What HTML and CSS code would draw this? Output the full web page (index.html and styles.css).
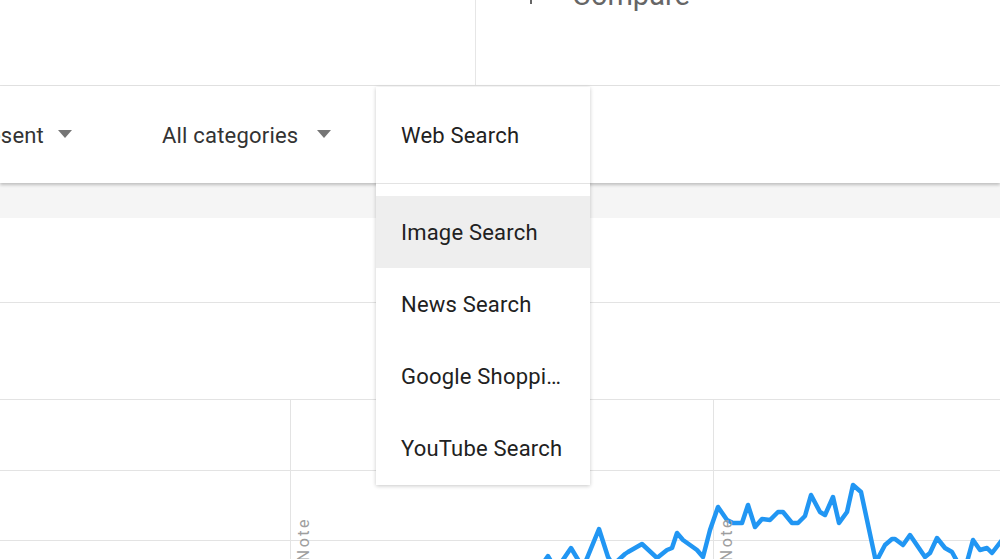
FILE: index.html
```html
<html>
<head>
    <title>Explore - Trends</title>
    <link rel="stylesheet" href="styles.css">
</head>
<body>
<div class="page">
    <header class="top">
        <div class="term"></div>
        <div class="compare">
            <svg class="plus" width="18" height="18" viewBox="0 0 18 18"><path d="M9 0v18M0 9h18"/></svg>
            <span>Compare</span>
        </div>
    </header>

    <div class="filters">
        <div class="filter clip"><span>2004 - present</span><i class="caret"></i></div>
        <div class="filter wide"><span>All categories</span><i class="caret"></i></div>
    </div>

    <div class="band"></div>
    <div class="row first"></div>
    <div class="row second"></div>

    <div class="chart">
        <svg width="1000" height="159" viewBox="0 400 1000 159">
            <g class="grid">
                <line x1="0" y1="470.5" x2="1000" y2="470.5" />
                <line x1="0" y1="540.5" x2="1000" y2="540.5" />
                <line x1="290.5" y1="400" x2="290.5" y2="560" />
                <line x1="713.5" y1="400" x2="713.5" y2="560" />
            </g>
            <path class="trend" d="M535 575 L548 556 L556 570 L571 548 L583 568 L599 529 L608 557 L613 565 L625 554 L628 552 L642 544 L657 558 L667 550 L672 548 L677 533 L683 540 L697 550 L703 557 L710 530 L718 507 L727 520 L733 523 L742 523 L748 505 L755 527 L762 519 L770 520 L778 512 L783 512 L792 523 L798 523 L805 516 L811 495 L820 512 L825 515 L833 497 L839 523 L847 512 L853 485 L861 492 L876 562 L885 545 L892 539 L895 539 L903 545 L910 535 L925 557 L930 553 L937 538 L945 548 L952 552 L958 563 L967 562 L973 540 L980 550 L987 548 L992 553 L1002 540" />
            <text class="note" transform="translate(309 517) rotate(-90)" text-anchor="end">Note</text>
            <text class="note" transform="translate(732 517) rotate(-90)" text-anchor="end">Note</text>
        </svg>
    </div>

    <ul class="menu">
        <li class="current">Web Search</li>
        <li class="hover">Image Search</li>
        <li>News Search</li>
        <li>Google Shopping</li>
        <li>YouTube Search</li>
    </ul>
</div>
</body>
</html>
```

FILE: styles.css
```css
body {
    margin: 0;
    background-color: #fff;
    font-family: Roboto, 'Noto Sans', sans-serif;
    color: #212121;
    overflow: hidden;
}
.page {
    position: relative;
    width: 1000px;
    height: 560px;
    overflow: hidden;
}
.top {
    display: flex;
    height: 85px;
    border-bottom: 1px solid #e3e3e3;
}
.term {
    width: 475px;
    border-right: 1px solid #e6e6e6;
}
.compare {
    display: flex;
    align-items: center;
    height: 28px;
    margin-top: -19px;
    padding-left: 46px;
    color: #666;
    font-size: 29px;
    line-height: 28px;
}
.plus {
    stroke: #666;
    stroke-width: 2;
    margin-right: 32px;
}
.filters {
    position: relative;
    z-index: 1;
    display: flex;
    align-items: center;
    height: 97px;
    padding-top: 2px;
    box-sizing: border-box;
    background-color: #fff;
    box-shadow: 0 2px 3px rgba(0, 0, 0, 0.22);
    font-size: 22px;
    letter-spacing: 0.2px;
    color: #333;
}
.filter {
    display: flex;
    align-items: center;
    gap: 14px;
    white-space: nowrap;
}
.filter.wide {
    gap: 19px;
}
.filter.clip {
    width: 72px;
    justify-content: flex-end;
    overflow: hidden;
    margin-right: 90px;
}
.filter span {
    flex-shrink: 0;
}
.caret {
    flex-shrink: 0;
    width: 0;
    height: 0;
    margin-bottom: 4px;
    border-left: 7px solid transparent;
    border-right: 7px solid transparent;
    border-top: 8px solid #757575;
}
.band {
    height: 35px;
    background-color: #f5f5f5;
}
.row {
    border-bottom: 1px solid #e3e3e3;
}
.row.first {
    height: 84px;
}
.row.second {
    height: 96px;
}
.chart svg {
    display: block;
}
.grid line {
    stroke: #e3e3e3;
    stroke-width: 1;
}
.trend {
    fill: none;
    stroke: #2196f3;
    stroke-width: 4.5;
    stroke-linejoin: round;
}
.note {
    font-family: Roboto, sans-serif;
    font-size: 16px;
    letter-spacing: 2.5px;
    fill: #9e9e9e;
}
.menu {
    position: absolute;
    top: 87px;
    left: 376px;
    width: 214px;
    margin: 0;
    padding: 0 0 1px 0;
    list-style: none;
    background-color: #fff;
    box-shadow: 0 1px 4px rgba(0, 0, 0, 0.22);
    font-size: 22px;
    letter-spacing: 0.2px;
    z-index: 2;
}
.menu li {
    height: 72px;
    line-height: 74px;
    padding: 0 26px 0 25px;
    white-space: nowrap;
    overflow: hidden;
    text-overflow: ellipsis;
}
.menu li.current {
    height: 96px;
    line-height: 98px;
    border-bottom: 1px solid #e3e3e3;
    margin-bottom: 12px;
}
.menu li.hover {
    background-color: #eeeeee;
}
```
